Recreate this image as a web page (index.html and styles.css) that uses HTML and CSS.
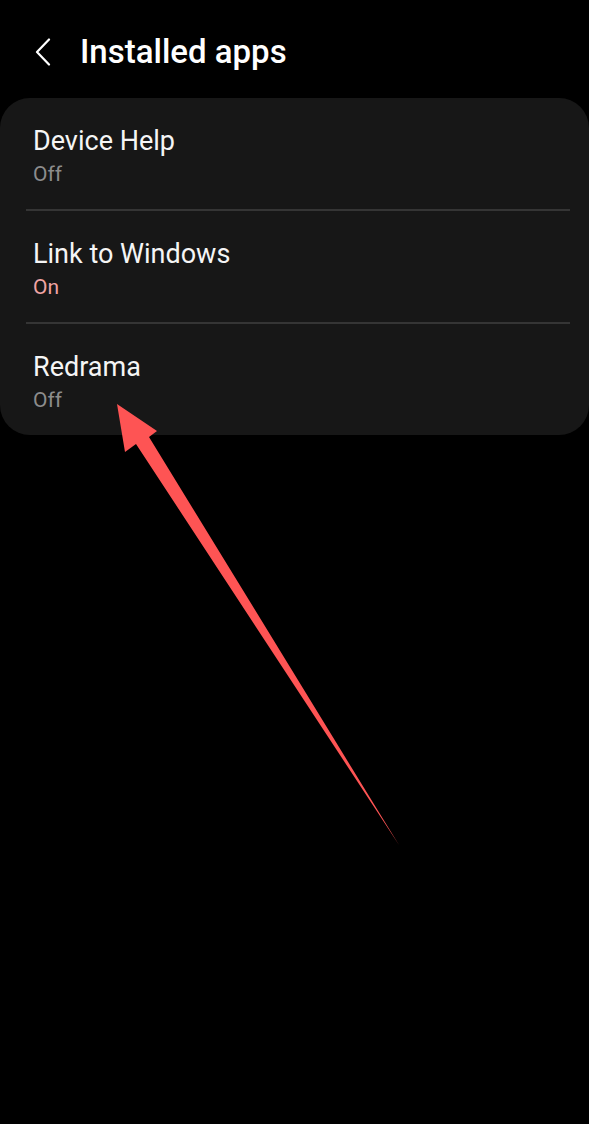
FILE: index.html
```html
<!DOCTYPE html>
<html>
<head>
<meta charset="utf-8">
<link rel="stylesheet" href="styles.css">
</head>
<body>
<div class="screen">
  <header class="topbar">
    <svg class="back" width="18" height="28" viewBox="0 0 18 28"><path d="M15 1.5 L3 14 L15 26.5" fill="none" stroke="#fff" stroke-width="2.2" stroke-linecap="round" stroke-linejoin="round"/></svg>
    <h1 class="title">Installed apps</h1>
  </header>
  <section class="card">
    <div class="row">
      <div class="name">Device Help</div>
      <div class="status off">Off</div>
    </div>
    <div class="divider"></div>
    <div class="row">
      <div class="name">Link to Windows</div>
      <div class="status on">On</div>
    </div>
    <div class="divider"></div>
    <div class="row">
      <div class="name">Redrama</div>
      <div class="status off">Off</div>
    </div>
  </section>
  <svg class="arrow" width="589" height="1124" viewBox="0 0 589 1124">
    <polygon points="117,404 157,431 149,437 399,845 136,444 125,452" fill="#fe5454"/>
  </svg>
</div>
</body>
</html>
```
FILE: styles.css
```css
html, body {
  margin: 0;
  padding: 0;
  background: #000;
}
.screen {
  position: relative;
  width: 589px;
  height: 1124px;
  background: #000;
  font-family: Roboto, "Noto Sans", sans-serif;
  color: #fafafa;
  overflow: hidden;
}
.topbar {
  height: 98px;
  display: flex;
  align-items: center;
  padding-left: 34px;
  padding-top: 5px;
  box-sizing: border-box;
}
.back {
  display: block;
  margin-top: 0;
}
.title {
  margin: 0 0 0 28px;
  font-size: 33px;
  line-height: 40px;
  font-weight: 500;
  color: #fff;
  letter-spacing: 0;
}
.card {
  background: #171717;
  border-radius: 30px;
  padding: 0 19px 0 26px;
}
.row {
  height: 111px;
  display: flex;
  flex-direction: column;
  justify-content: flex-start;
  padding: 28px 0 0 7px;
  box-sizing: border-box;
}
.name {
  font-size: 27px;
  line-height: 30px;
  color: #f5f5f5;
}
.status {
  font-size: 21px;
  line-height: 24px;
  margin-top: 6px;
}
.status.off { color: #8c8c8c; }
.status.on { color: #f0a3a3; }
.divider {
  height: 2px;
  background: #353535;
}
.arrow {
  position: absolute;
  left: 0;
  top: 0;
  pointer-events: none;
}
```
